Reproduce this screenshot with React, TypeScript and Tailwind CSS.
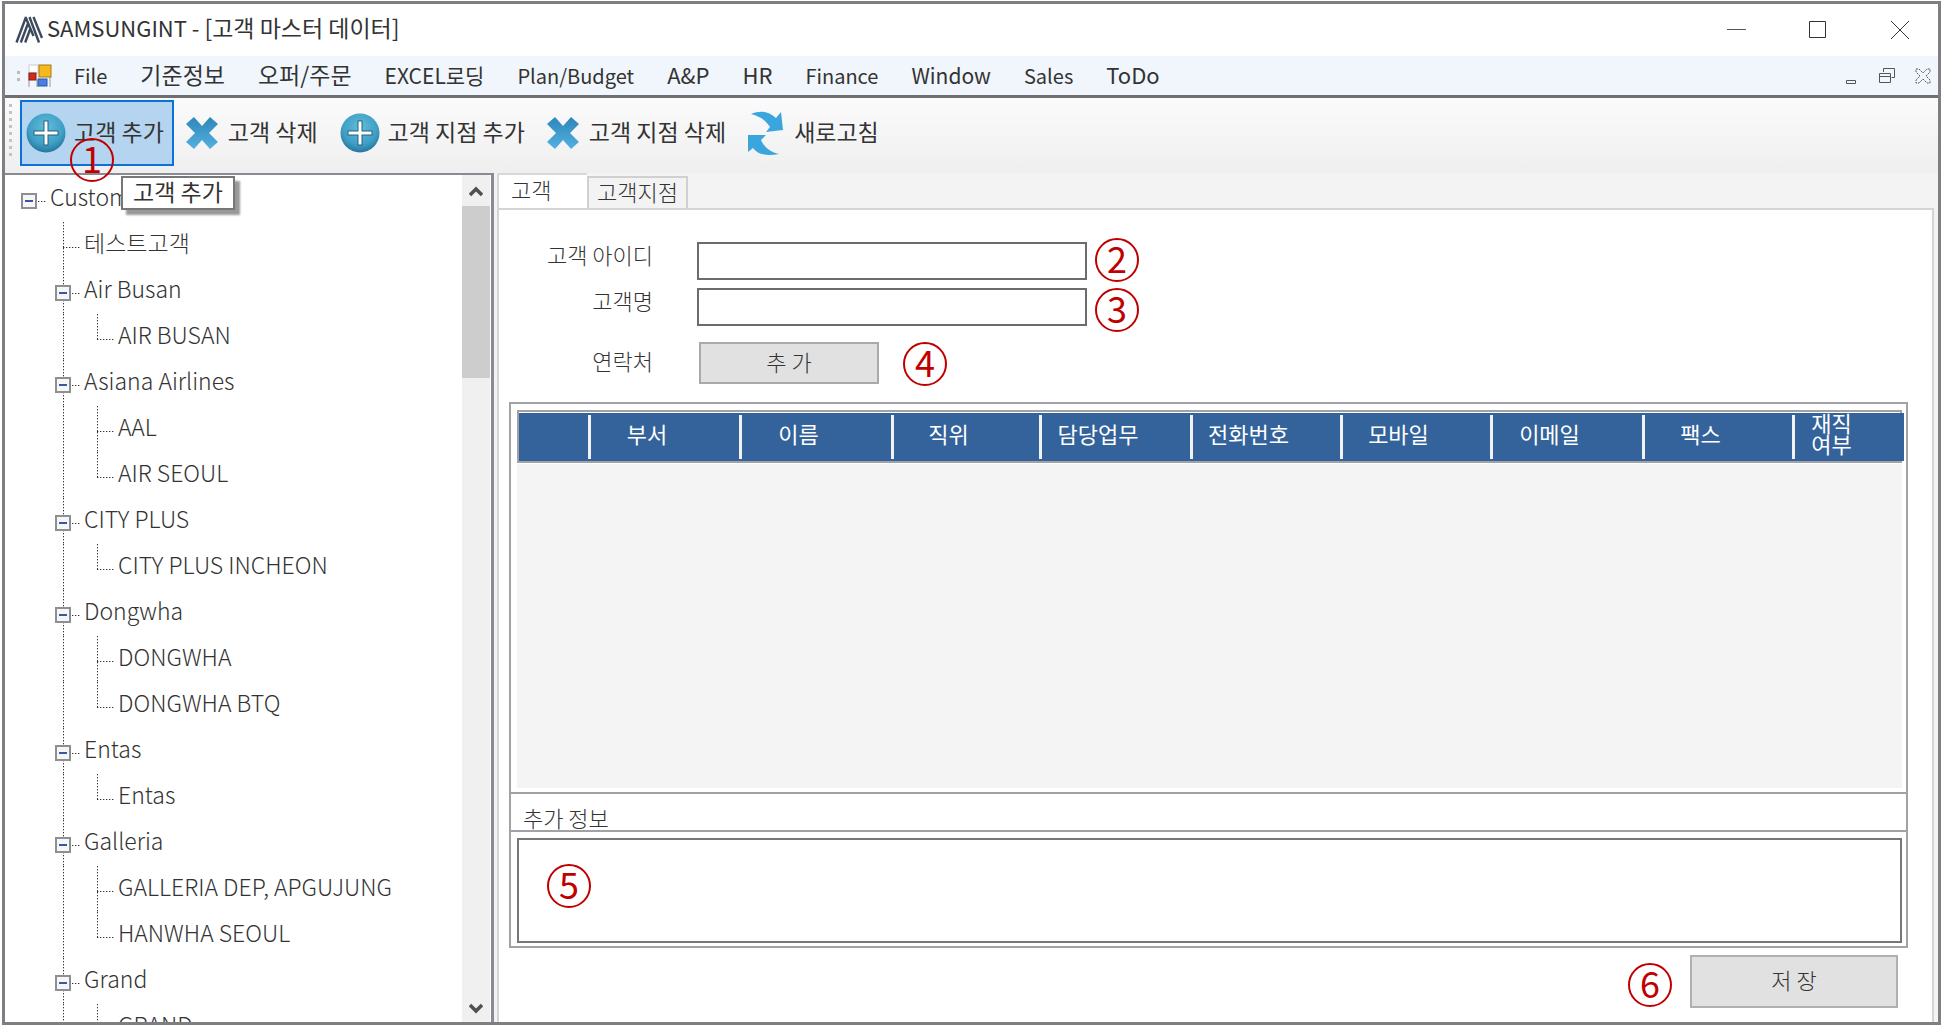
import { useState, type ReactNode } from "react";

type Node = { label: string; level: 0 | 1 | 2; last?: boolean };

const nodes: Node[] = [
  { label: "Customer", level: 0 },
  { label: "테스트고객", level: 1 },
  { label: "Air Busan", level: 1 },
  { label: "AIR BUSAN", level: 2, last: true },
  { label: "Asiana Airlines", level: 1 },
  { label: "AAL", level: 2 },
  { label: "AIR SEOUL", level: 2, last: true },
  { label: "CITY PLUS", level: 1 },
  { label: "CITY PLUS INCHEON", level: 2, last: true },
  { label: "Dongwha", level: 1 },
  { label: "DONGWHA", level: 2 },
  { label: "DONGWHA BTQ", level: 2, last: true },
  { label: "Entas", level: 1 },
  { label: "Entas", level: 2, last: true },
  { label: "Galleria", level: 1 },
  { label: "GALLERIA DEP, APGUJUNG", level: 2 },
  { label: "HANWHA SEOUL", level: 2, last: true },
  { label: "Grand", level: 1 },
  { label: "GRAND", level: 2 },
];

const menus = [
  { label: "File", size: "text-[20px]" },
  { label: "기준정보", size: "text-[23px]" },
  { label: "오퍼/주문", size: "text-[23px]" },
  { label: "EXCEL로딩", size: "text-[21px]" },
  { label: "Plan/Budget", size: "text-[20px]" },
  { label: "A&P", size: "text-[22px]" },
  { label: "HR", size: "text-[22px]" },
  { label: "Finance", size: "text-[20px]" },
  { label: "Window", size: "text-[21px]" },
  { label: "Sales", size: "text-[20px]" },
  { label: "ToDo", size: "text-[22px]" },
];

function Badge({ n, className = "" }: { n: number; className?: string }) {
  return (
    <span className={`flex size-11 shrink-0 items-center justify-center rounded-full border-2 border-[#c00000] pb-1.5 text-[36px] leading-none font-normal text-[#c00000] ${className}`}>
      {n}
    </span>
  );
}

function Logo() {
  return (
    <svg viewBox="0 0 28 28" className="size-7 shrink-0" fill="none" stroke="#3c4a5c" strokeWidth="2.400">
      <path d="M1.500 26.500 11 1M5.800 26.500 13.200 7M10.200 26.500 15.400 12.500M10.500 1 18.500 20M14.500 1 24 26.500M18.500 1 27 22" />
    </svg>
  );
}

function PlusIcon() {
  return (
    <svg viewBox="0 0 40 40" className="size-10 shrink-0">
      <defs>
        <radialGradient id="orb" cx="50%" cy="35%" r="68%">
          <stop offset="0" stopColor="#63bcd9" />
          <stop offset="0.65" stopColor="#3f9fc6" />
          <stop offset="1" stopColor="#22709a" />
        </radialGradient>
      </defs>
      <circle cx="20" cy="20" r="19.500" fill="url(#orb)" />
      <path d="M20 7.500v25M7.500 20h25" stroke="#23627f" strokeWidth="5" />
      <path d="M20 8.500v23M8.500 20h23" stroke="#fff" strokeWidth="3" />
    </svg>
  );
}

function CrossIcon() {
  return (
    <svg viewBox="0 0 32 32" className="mr-0.5 size-8 shrink-0">
      <defs>
        <linearGradient id="cross" x1="0" y1="0" x2="0" y2="1">
          <stop offset="0" stopColor="#2f86b8" />
          <stop offset="1" stopColor="#54b0e2" />
        </linearGradient>
      </defs>
      <path d="M8 0 16 9 24 0 32 7 23 16 32 25 24 32 16 23 8 32 0 25 9 16 0 7Z" fill="url(#cross)" />
    </svg>
  );
}

function RefreshIcon() {
  return (
    <svg viewBox="0 0 36 46" className="mr-0.5 h-[46px] w-9 shrink-0" fill="#3aa6dd">
      <path d="M3 4C12 0 21 1 28 8L33 2 35 20 18 22 22 17C18 10 11 6 3 4Z" />
      <path d="M0 25 18 25 13 30C16 37 22 42 31 44 22 46 11 46 5 38L0 42Z" />
    </svg>
  );
}

function FormsIcon() {
  return (
    <svg viewBox="0 0 24 24" className="size-6 shrink-0">
      <rect x="1" y="1" width="9" height="8" fill="#fff" stroke="#ccc" />
      <path d="M1 9v14M9 16v7M22 13v10" stroke="#999" />
      <rect x="11" y="1" width="12" height="12" fill="#f5b91e" stroke="#a87a10" />
      <rect x="1" y="9" width="7" height="7" fill="#d02c1c" stroke="#8c1c12" />
      <rect x="10" y="15" width="9" height="7" fill="#4a7fe0" stroke="#2c56a8" />
    </svg>
  );
}

const vDots = "bg-[repeating-linear-gradient(to_bottom,#333_0_1px,#bbb_1px_2px,transparent_2px_3px)]";
const hDots = "bg-[repeating-linear-gradient(to_right,#333_0_1px,#bbb_1px_2px,transparent_2px_3px)]";

function GuideCell({ up, down, stub, box }: { up: boolean; down: boolean; stub: boolean; box: boolean }) {
  return (
    <span className="relative flex w-[34px] flex-col pl-[17px]">
      <span className={`h-[25px] w-px ${up ? vDots : ""}`} />
      <span className={`h-px ${stub ? hDots : ""}`} />
      <span className={`w-px flex-1 ${down ? vDots : ""}`} />
      {box && (
        <span className="absolute top-[17px] left-[9px] flex size-4 items-center justify-center border-2 border-[#8e8e94] bg-[#f6f6f6]">
          <span className="h-0.5 w-2 bg-[#3558a8]" />
        </span>
      )}
    </span>
  );
}

function TreeRow({ node, index }: { node: Node; index: number }) {
  const expandable = node.level === 0 || (node.level === 1 && index !== 1);
  return (
    <li className="flex h-[46px] shrink-0">
      {node.level > 0 && <span className="w-[34px]" />}
      {node.level === 2 && <GuideCell up down stub={false} box={false} />}
      <GuideCell up={node.level > 0} down={node.level === 1 || (node.level === 2 && !node.last)} stub box={expandable} />
      <span className="pl-1 text-[23px] leading-10 font-light whitespace-nowrap text-[#333]">{node.label}</span>
    </li>
  );
}

function ToolButton({ icon, label, active = false, children }: { icon: ReactNode; label: string; active?: boolean; children?: ReactNode }) {
  return (
    <button
      type="button"
      className={`relative flex h-[66px] items-center gap-2 border-2 pr-2 text-[23px] whitespace-nowrap ${active ? "border-[#0a72d8] bg-[#b4d4f0] pl-1" : "border-transparent pl-2.5"}`}
    >
      {icon}
      <span className="pb-1">{label}</span>
      {children}
    </button>
  );
}

const columns = [
  { label: "", col: "w-[72px]" },
  { label: "부서", col: "w-[151px]" },
  { label: "이름", col: "w-[152px]" },
  { label: "직위", col: "w-[148px]" },
  { label: "담당업무", col: "w-[151px]" },
  { label: "전화번호", col: "w-[150px]" },
  { label: "모바일", col: "w-[150px]" },
  { label: "이메일", col: "w-[152px]" },
  { label: "팩스", col: "w-[150px]" },
  { label: "재직\n여부", col: "w-[109px]" },
];

export default function App() {
  const [tab, setTab] = useState(0);
  return (
    <div className="h-screen bg-white pt-px pr-0.5 pb-0.5 pl-0.5 font-['Noto_Sans_CJK_KR','Noto_Sans',sans-serif] text-[22px] leading-7 text-[#333]">
      <div className="flex h-full flex-col border-[3px] border-[#7f7f83] bg-[#f3f3f3]">
        <header className="flex h-[52px] shrink-0 items-center bg-white pl-2.5">
          <Logo />
          <h1 className="pb-1.5 pl-1">
            SAMSUNGINT - <span className="text-[23px]">[고객 마스터 데이터]</span>
          </h1>
          <div className="ml-auto flex items-center gap-[62px] pr-7">
            <button type="button" aria-label="Minimize">
              <svg viewBox="0 0 20 20" className="size-5" stroke="#555" fill="none"><path d="M1 9.500h19" /></svg>
            </button>
            <button type="button" aria-label="Maximize">
              <svg viewBox="0 0 20 20" className="size-5" stroke="#333" fill="none"><path d="M1.500 1.500h16v16h-16z" /></svg>
            </button>
            <button type="button" aria-label="Close">
              <svg viewBox="0 0 20 20" className="size-5" stroke="#333" fill="none"><path d="M1 1 19 19M19 1 1 19" /></svg>
            </button>
          </div>
        </header>

        <nav className="flex h-[42px] shrink-0 items-center border-b-[3px] border-[#6e6e74] bg-[#f1f6fc] pl-3">
          <span className="mr-2 flex flex-col gap-1">
            <span className="size-[3px] bg-[#bbb]" />
            <span className="size-[3px] bg-[#bbb]" />
          </span>
          <FormsIcon />
          <ul className="flex items-baseline gap-[33px] pb-0.5 pl-[22px]">
            {menus.map((m) => (
              <li key={m.label}>
                <button type="button" className={`whitespace-nowrap ${m.size}`}>{m.label}</button>
              </li>
            ))}
          </ul>
          <div className="ml-auto flex items-center gap-[18px] pr-1.5">
            <button type="button" aria-label="Minimize child">
              <svg viewBox="0 0 18 18" className="size-[18px]" stroke="#555" fill="none"><path d="M4.500 13.500h9v3h-9z" /></svg>
            </button>
            <button type="button" aria-label="Restore child">
              <svg viewBox="0 0 18 18" className="size-[18px]" stroke="#555" fill="none"><path d="M5.500 5v-3.500h11v9h-3M1.500 6.500h11v9h-11zM1.500 9.500h11" /></svg>
            </button>
            <button type="button" aria-label="Close child">
              <svg viewBox="0 0 18 18" className="size-[18px]" stroke="#555" fill="none" strokeDasharray="2 1"><path d="M2 2h3l4 4 4-4h3v3l-4 4 4 4v3h-3l-4-4-4 4H2v-3l4-4-4-4z" /></svg>
            </button>
          </div>
        </nav>

        <div className="flex h-[75px] shrink-0 items-start bg-gradient-to-b from-[#fbfbfb] to-[#efefef] pt-0.5 pl-1">
          <span className="mt-1 mr-2 flex flex-col gap-1">
            {[0, 1, 2, 3, 4, 5, 6, 7].map((i) => (
              <span key={i} className="size-[3px] bg-[#c4c4c4]" />
            ))}
          </span>
          <ToolButton icon={<PlusIcon />} label="고객 추가" active>
            <Badge n={1} className="absolute top-9 left-12 z-20" />
            <span role="tooltip" className="absolute top-[74px] left-[99px] z-10 border-2 border-[#777] bg-white px-2.5 pb-1 leading-[26px] shadow-[5px_5px_2px_#999]">
              고객 추가
            </span>
          </ToolButton>
          <ToolButton icon={<CrossIcon />} label="고객 삭제" />
          <ToolButton icon={<PlusIcon />} label="고객 지점 추가" />
          <ToolButton icon={<CrossIcon />} label="고객 지점 삭제" />
          <ToolButton icon={<RefreshIcon />} label="새로고침" />
        </div>

        <div className="flex min-h-0 flex-1">
          <aside className="flex w-[489px] shrink-0 border-t-2 border-r-[3px] border-[#8a8a92] bg-white">
            <ul className="flex flex-1 flex-col overflow-hidden pt-px pl-[7px]">
              {nodes.map((n, i) => (
                <TreeRow key={i} node={n} index={i} />
              ))}
            </ul>
            <div className="mr-px flex w-7 flex-col bg-[#f0f0f0]">
              <button type="button" aria-label="Scroll up" className="flex h-[31px] items-center justify-center">
                <svg viewBox="0 0 14 12" className="h-3 w-3.5" fill="none" stroke="#505050" strokeWidth="3.500"><path d="M1 10 7 4l6 6" /></svg>
              </button>
              <div className="h-[172px] bg-[#cdcdcd]" />
              <button type="button" aria-label="Scroll down" className="mt-auto flex h-[26px] items-center justify-center">
                <svg viewBox="0 0 14 12" className="h-3 w-3.5" fill="none" stroke="#505050" strokeWidth="3.500"><path d="M1 2 7 8l6-6" /></svg>
              </button>
            </div>
          </aside>

          <main className="ml-[3px] flex min-w-0 flex-1 flex-col pr-1">
            <div role="tablist" className="flex h-[37px] shrink-0 items-end border-l-2 border-[#d8d8d8] font-light">
              <button type="button" role="tab" aria-selected={tab === 0} onClick={() => setTab(0)} className="flex h-[37px] w-[88px] border-t-2 border-[#d8d8d8] bg-white pl-3">
                고객
              </button>
              <button type="button" role="tab" aria-selected={tab === 1} onClick={() => setTab(1)} className="flex h-[34px] w-[101px] items-center border-2 border-b-0 border-[#d0d0d0] pb-1.5 pl-2">
                고객지점
              </button>
            </div>
            <section className="-mt-0.5 flex min-h-0 flex-1 flex-col border-x-2 border-t-2 border-[#d4d4d4] bg-white pr-6 pl-2.5">
              <form className="flex flex-col pt-8 pl-[34px] font-light">
                <div className="flex h-[46px] items-start">
                  <label htmlFor="cid" className="-mt-0.5 w-[110px] text-right whitespace-nowrap">고객 아이디</label>
                  <input id="cid" className="ml-11 h-[38px] w-[390px] border-2 border-[#6c6c70] bg-white px-2" />
                  <Badge n={2} className="-mt-1 ml-2" />
                </div>
                <div className="flex h-[54px] items-start">
                  <label htmlFor="cname" className="-mt-0.5 w-[110px] text-right">고객명</label>
                  <input id="cname" className="ml-11 h-[38px] w-[390px] border-2 border-[#6c6c70] bg-white px-2" />
                  <Badge n={3} className="ml-2" />
                </div>
                <div className="flex h-[60px] items-start">
                  <label htmlFor="add" className="w-[110px] pt-1 text-right">연락처</label>
                  <button id="add" type="button" className="ml-[46px] h-[42px] w-[180px] border-2 border-[#aaa] bg-[#e1e1e1] pb-1">추 가</button>
                  <Badge n={4} className="ml-6" />
                </div>
              </form>

              <div className="flex min-h-0 flex-1 flex-col border-2 border-[#a2a2a6]">
                <div className="flex min-h-0 flex-1 flex-col pt-1.5 pr-1 pb-1 pl-1.5">
                  <div className="border-2 border-[#a2a2a6] pt-px">
                    <table className="w-full table-fixed border-collapse">
                      <colgroup>
                        {columns.map((c, i) => <col key={i} className={c.col} />)}
                      </colgroup>
                      <thead>
                        <tr className="h-12 bg-[#33639a] text-white">
                          {columns.map((c, i) => (
                            <th key={i} scope="col" className="p-0 font-normal">
                              <div className={`flex h-11 items-center justify-center pr-9 pb-2 leading-[21px] whitespace-pre ${i < 9 ? "border-r-[3px] border-[#f2f2f2]" : ""}`}>
                                {c.label}
                              </div>
                            </th>
                          ))}
                        </tr>
                      </thead>
                    </table>
                  </div>
                  <div className="mt-px flex-1 bg-[#f4f4f4]" />
                </div>
                <h2 className="h-10 shrink-0 border-y-2 border-[#a2a2a6] pl-3 leading-[46px] font-light">
                  <label htmlFor="info">추가 정보</label>
                </h2>
                <div className="relative flex pt-1.5 pr-1 pb-[3px] pl-1.5">
                  <textarea id="info" className="h-[105px] w-full resize-none border-2 border-[#77777b] bg-white p-2" />
                  <Badge n={5} className="absolute top-8 left-9" />
                </div>
              </div>

              <div className="flex h-[74px] shrink-0 items-start justify-end gap-[18px] pt-[7px] pr-2.5">
                <Badge n={6} className="mt-2" />
                <button type="button" className="h-[53px] w-[208px] border-2 border-[#b0b0b0] bg-[#e1e1e1] pb-1.5 font-light">저 장</button>
              </div>
            </section>
          </main>
        </div>
      </div>
    </div>
  );
}
